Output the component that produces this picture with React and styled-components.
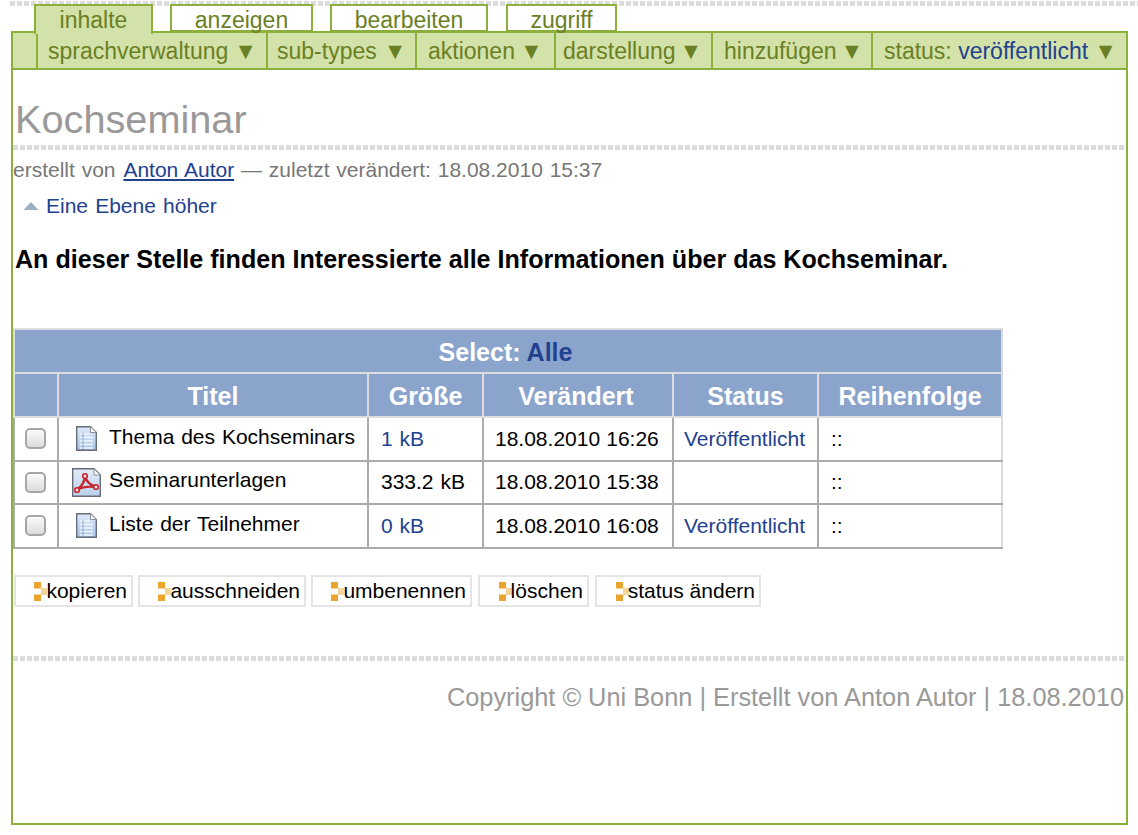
import React from 'react';
import styled, { createGlobalStyle } from 'styled-components';

const Global = createGlobalStyle`
  html, body { margin: 0; padding: 0; background: #fff; }
  body { font-family: "Liberation Sans", Arial, sans-serif; color: #000; }
`;

const dotted = `repeating-linear-gradient(90deg, #dcdcdc 0, #dcdcdc 5px, #fff 5px, #fff 7px)`;

const Page = styled.div`
  width: 1138px;
  height: 835px;
  box-sizing: border-box;
  padding-top: 1px;
  overflow: hidden;
`;
const TopRule = styled.div`
  height: 5px;
  margin-left: 10px;
  margin-bottom: -2px;
  background: ${dotted};
`;
const Tabs = styled.div`
  display: flex;
  padding-left: 34px;
  height: 27px;
  position: relative;
  z-index: 1;
`;
const Tab = styled.div`
  box-sizing: border-box;
  width: ${p => p.$w}px;
  margin-right: ${p => p.$gap}px;
  height: ${p => (p.$active ? 30 : 28)}px;
  border: 2px solid #8cb03c;
  border-bottom: ${p => (p.$active ? 'none' : '2px solid #8cb03c')};
  background: ${p => (p.$active ? '#d3e2a8' : '#fff')};
  color: #6a8024;
  font-size: 23px;
  line-height: 28px;
  text-align: center;
  white-space: nowrap;
`;
const Frame = styled.div`
  margin: 0 10px 0 11px;
  height: 794px;
  box-sizing: border-box;
  border: 2px solid #8cb03c;
  border-top: none;
`;
const Menu = styled.div`
  display: flex;
  height: 39px;
  box-sizing: border-box;
  margin: 0 -2px;
  border: 2px solid #8cb03c;
  background: #d3e2a8;
  padding-left: 23px;
`;
const MenuItem = styled.div`
  box-sizing: border-box;
  width: ${p => p.$w}px;
  border-left: 2px solid #8cb03c;
  color: #6a8024;
  font-size: 23px;
  line-height: 36px;
  padding-left: ${p => p.$pad}px;
  white-space: nowrap;
`;
const Accent = styled.span`
  color: #22418f;
`;
const Title = styled.h1`
  margin: 28px 0 0 2px;
  font-size: 39.7px;
  line-height: 42px;
  font-weight: 400;
  color: #999;
`;
const Rule = styled.div`
  height: 5px;
  background: ${dotted};
  margin-top: ${p => p.$top}px;
`;
const Byline = styled.div`
  margin-top: 7px;
  font-size: 21px;
  line-height: 26px;
  color: #777;
  word-spacing: 1px;
`;
const AuthorLink = styled.a`
  margin-left: 1px;
  color: #22418f;
  text-decoration: underline;
`;
const UpLink = styled.div`
  display: flex;
  align-items: center;
  gap: 7px;
  margin: 10px 0 0 10px;
  font-size: 21px;
  line-height: 26px;
  color: #22418f;
  word-spacing: 1.3px;
`;
const Lead = styled.p`
  margin: 27px 0 0 2px;
  font-size: 25.1px;
  line-height: 26px;
  font-weight: 700;
`;
const Table = styled.table`
  border-collapse: collapse;
  table-layout: fixed;
  width: 989px;
  margin: 56px 0 0;
`;
const HeadCell = styled.th`
  height: 44px;
  padding: 2px ${p => p.$pr ?? 0}px 0 0;
  box-sizing: border-box;
  background: #8aa4cc;
  border: 2px solid #dcdcdc;
  color: #fff;
  font-size: 25px;
  line-height: 26px;
  font-weight: 700;
  text-align: center;
`;
const Cell = styled.td`
  height: 43.6px;
  padding: 0 0 0 ${p => p.$pad ?? 12}px;
  box-sizing: border-box;
  border: 2px solid #ababab;
  border-top-color: ${p => (p.$first ? '#dcdcdc' : '#ababab')};
  border-right-color: ${p => (p.$last ? '#dcdcdc' : '#ababab')};
  font-size: 21px;
  line-height: 24px;
  word-spacing: ${p => p.$ws ?? 1}px;
  white-space: nowrap;
  color: ${p => (p.$link ? '#22418f' : '#000')};
`;
const TitleWrap = styled.div`
  display: flex;
  align-items: center;
  height: 100%;
`;
const IconSlot = styled.span`
  width: 41px;
  padding-left: ${p => p.$inset}px;
  box-sizing: border-box;
  display: flex;
  flex: none;
`;
const Name = styled.span`
  position: relative;
  top: -2px;
`;
const Check = styled.input.attrs({ type: 'checkbox' })`
  appearance: none;
  display: block;
  width: 21px;
  height: 21px;
  margin: 0 0 0 10px;
  box-sizing: border-box;
  border: 2px solid #a6a6a6;
  border-radius: 5px;
  background: linear-gradient(#fbfbfb, #e8e8e8 60%, #dcdcdc);
  box-shadow: inset 0 1px 1px #fff;
`;
const Actions = styled.div`
  display: flex;
  margin: 26px 0 0 1px;
`;
const Action = styled.div`
  box-sizing: border-box;
  width: ${p => p.$w}px;
  margin-right: ${p => p.$gap}px;
  height: 32px;
  border: 2px solid #e4e4e4;
  display: flex;
  align-items: center;
  justify-content: flex-end;
  padding: 1px 4px 0 0;
  font-size: 21px;
`;
const ActionGlyph = styled.svg`
  margin-right: -1px;
  flex: none;
`;
const Footer = styled.div`
  margin-top: 22px;
  padding-right: 2px;
  text-align: right;
  font-size: 25.35px;
  line-height: 28px;
  color: #999;
  white-space: nowrap;
`;
const Arrow = styled.span`
  margin-left: ${p => p.$gap}px;
`;

const DocIcon = () => (
  <svg width="21" height="25" viewBox="0 0 21 25">
    <defs>
      <linearGradient id="docFill" x1="0" y1="0" x2="0" y2="1">
        <stop offset="0" stopColor="#dfe9f8" />
        <stop offset="1" stopColor="#a9c4ea" />
      </linearGradient>
    </defs>
    <path d="M.7.7h13.800l5.800 5.800v17.800H.7z" fill="url(#docFill)" stroke="#666c78" strokeWidth="1.4" />
    <path d="M14.500.7v5.800h5.800z" fill="#fff" stroke="#8b8f96" />
    <path d="M4 8h10M4 11.500h13M4 15h13M4 18.500h13M4 22h13" stroke="#f4f7fc" strokeWidth="1.3" />
    <path d="M7 7v16" stroke="#8fa8d0" strokeWidth="1" />
  </svg>
);
const PdfIcon = () => (
  <svg width="29" height="29" viewBox="0 0 29 29">
    <defs>
      <linearGradient id="pdfFill" x1="0" y1="0" x2="0" y2="1">
        <stop offset="0" stopColor="#e4ebf7" />
        <stop offset="1" stopColor="#bcd0ec" />
      </linearGradient>
    </defs>
    <path d="M.7.7h21.300l6.300 6.300v21.300H.7z" fill="url(#pdfFill)" stroke="#666c78" strokeWidth="1.4" />
    <path d="M22 .7v6.300h6.300z" fill="#fff" stroke="#8b8f96" />
    <path d="M13 8c0 5-2 9-8 14M13 8c1 5 5 9 11 11M5 22c5-3 12-4 19-3" fill="none" stroke="#c4262b" strokeWidth="2.4" />
    <circle cx="13" cy="8" r="2.300" fill="#f3dede" stroke="#c4262b" strokeWidth="1.6" />
    <circle cx="5" cy="22" r="2.300" fill="#f3dede" stroke="#c4262b" strokeWidth="1.6" />
    <circle cx="24" cy="19" r="2.300" fill="#f3dede" stroke="#c4262b" strokeWidth="1.6" />
  </svg>
);
const UpArrow = () => (
  <svg width="16" height="10" viewBox="0 0 16 10">
    <path d="M8 1l7.500 8H.5z" fill="#9cb0c4" />
  </svg>
);
const ActionIcon = () => (
  <ActionGlyph width="13" height="19" viewBox="0 0 13 19">
    <rect x="0" y="0" width="7" height="6.500" fill="#eba52e" />
    <rect x="0" y="12.500" width="7" height="6.500" fill="#eba52e" />
    <rect x="7" y="6" width="6" height="7" fill="#f3d49c" />
  </ActionGlyph>
);

const tabs = [
  ['inhalte', 119, 17, true],
  ['anzeigen', 143, 17],
  ['bearbeiten', 158, 18],
  ['zugriff', 111, 0],
];
const menu = [
  ['sprachverwaltung', 230, 10, 6],
  ['sub-types', 149, 9, 7],
  ['aktionen', 139, 11, 5],
  ['darstellung', 157, 7, 4],
  ['hinzufügen', 160, 11, 4],
];
const rows = [
  { name: 'Thema des Kochseminars', icon: 'doc', size: '1 kB', sizeLink: true, date: '18.08.2010 16:26', status: 'Veröffentlicht' },
  { name: 'Seminarunterlagen', icon: 'pdf', size: '333.2 kB', date: '18.08.2010 15:38', status: '' },
  { name: 'Liste der Teilnehmer', icon: 'doc', size: '0 kB', sizeLink: true, date: '18.08.2010 16:08', status: 'Veröffentlicht' },
];
const actions = [
  ['kopieren', 119, 5],
  ['ausschneiden', 168, 5],
  ['umbenennen', 161, 6],
  ['löschen', 111, 6],
  ['status ändern', 166, 0],
];

export default function App() {
  return (
    <Page>
      <Global />
      <TopRule />
      <Tabs>
        {tabs.map(([t, w, g, a]) => (
          <Tab key={t} $w={w} $gap={g} $active={a}>{t}</Tab>
        ))}
      </Tabs>
      <Frame>
        <Menu>
          {menu.map(([t, w, pad, gap]) => (
            <MenuItem key={t} $w={w} $pad={pad}>{t}<Arrow $gap={gap}>▼</Arrow></MenuItem>
          ))}
          <MenuItem $w={254} $pad={11}>status: <Accent>veröffentlicht</Accent><Arrow $gap={6}>▼</Arrow></MenuItem>
        </Menu>
        <Title>Kochseminar</Title>
        <Rule $top={5} />
        <Byline>erstellt von <AuthorLink href="#">Anton Autor</AuthorLink> — zuletzt verändert: 18.08.2010 15:37</Byline>
        <UpLink><UpArrow />Eine Ebene höher</UpLink>
        <Lead>An dieser Stelle finden Interessierte alle Informationen über das Kochseminar.</Lead>
        <Table>
          <colgroup>
            <col width="44" /><col width="310" /><col width="115" /><col width="190" /><col width="145" /><col width="184" />
          </colgroup>
          <thead>
            <tr><HeadCell colSpan={6} $pr={5}>Select: <Accent>Alle</Accent></HeadCell></tr>
            <tr>
              <HeadCell />
              <HeadCell>Titel</HeadCell>
              <HeadCell>Größe</HeadCell>
              <HeadCell $pr={4}>Verändert</HeadCell>
              <HeadCell>Status</HeadCell>
              <HeadCell>Reihenfolge</HeadCell>
            </tr>
          </thead>
          <tbody>
            {rows.map((r, i) => (
              <tr key={r.name}>
                <Cell $pad={0} $first={i === 0}><Check /></Cell>
                <Cell $pad={9} $first={i === 0}>
                  <TitleWrap>
                    <IconSlot $inset={r.icon === 'doc' ? 8 : 4}>{r.icon === 'doc' ? <DocIcon /> : <PdfIcon />}</IconSlot>
                    <Name>{r.name}</Name>
                  </TitleWrap>
                </Cell>
                <Cell $first={i === 0} $link={r.sizeLink}>{r.size}</Cell>
                <Cell $first={i === 0} $pad={11} $ws={0.3}>{r.date}</Cell>
                <Cell $first={i === 0} $pad={10} $link>{r.status}</Cell>
                <Cell $first={i === 0} $last>::</Cell>
              </tr>
            ))}
          </tbody>
        </Table>
        <Actions>
          {actions.map(([t, w, g]) => (
            <Action key={t} $w={w} $gap={g}><ActionIcon />{t}</Action>
          ))}
        </Actions>
        <Rule $top={49} />
        <Footer>Copyright © Uni Bonn | Erstellt von Anton Autor | 18.08.2010</Footer>
      </Frame>
    </Page>
  );
}
